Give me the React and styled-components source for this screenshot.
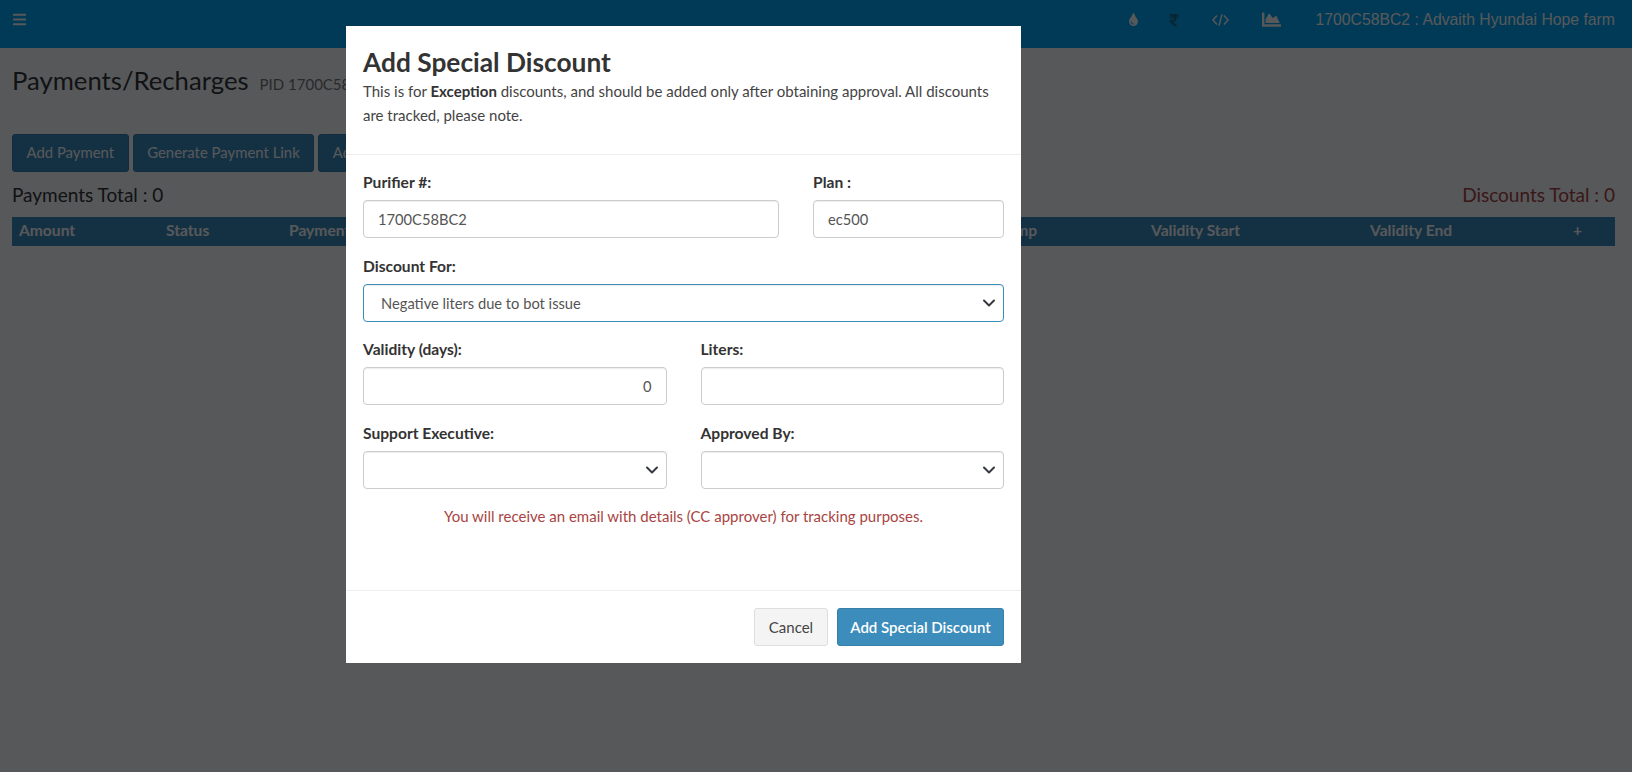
import React from 'react'
import styled, { createGlobalStyle } from 'styled-components'
import { FaBars, FaTint, FaRupeeSign, FaChartArea } from 'react-icons/fa'

const sans = `Lato, "Noto Sans", sans-serif`

const GlobalStyle = createGlobalStyle`
  html, body {
    margin: 0;
    height: 100%;
    background: #fff;
    font-family: ${sans};
    overflow: hidden;
  }
  * { box-sizing: border-box; }
`

const columns = [
  ['Amount', 147],
  ['Status', 123],
  ['Payment Mode', 336],
  ['Reference', 335],
  ['Timestamp', 191],
  ['Validity Start', 219],
  ['Validity End', 203],
  ['+', 26],
]

export default function App() {
  return (
    <>
      <GlobalStyle />
      <Page>
        <NavBar>
          <NavIcon><FaBars size={15} /></NavIcon>
          <NavRight>
            <TopIcon $width={31}><FaTint size={13} /></TopIcon>
            <TopIcon $width={51} $dark><FaRupeeSign size={14} /></TopIcon>
            <TopIcon $width={42}><CodeIcon /></TopIcon>
            <TopIcon $width={60}><FaChartArea size={19} /></TopIcon>
            <NavTitle>1700C58BC2 : Advaith Hyundai Hope farm</NavTitle>
          </NavRight>
        </NavBar>
        <Content>
          <TitleRow>
            <Title>Payments/Recharges</Title>
            <Small>PID 1700C58BC2</Small>
          </TitleRow>
          <Buttons>
            <ToolButton>Add Payment</ToolButton>
            <ToolButton>Generate Payment Link</ToolButton>
            <ToolButton>Add Special Discount</ToolButton>
          </Buttons>
          <Totals>
            <span>Payments Total : 0</span>
            <DiscountTotal>Discounts Total : 0</DiscountTotal>
          </Totals>
          <TableHead>
            {columns.map(([name, width]) => (
              <HeadCell key={name} $width={width}>{name}</HeadCell>
            ))}
          </TableHead>
        </Content>
      </Page>

      <Backdrop />

      <Modal>
        <ModalHeader>
          <ModalTitle>Add Special Discount</ModalTitle>
          <Description>
            This is for <strong>Exception</strong> discounts, and should be added only after obtaining approval. All discounts are tracked, please note.
          </Description>
        </ModalHeader>
        <ModalBody>
          <FormRow $cols="416px 191px">
            <Field>
              <Label>Purifier #:</Label>
              <Input readOnly value="1700C58BC2" />
            </Field>
            <Field>
              <Label>Plan :</Label>
              <Input readOnly value="ec500" />
            </Field>
          </FormRow>
          <FormRow $cols="1fr">
            <Field>
              <Label>Discount For:</Label>
              <SelectBox>
                <Select $focused defaultValue="neg">
                  <option value="neg">Negative liters due to bot issue</option>
                </Select>
                <Chevron />
              </SelectBox>
            </Field>
          </FormRow>
          <FormRow $cols="1fr 1fr">
            <Field>
              <Label>Validity (days):</Label>
              <Input $right readOnly value="0" />
            </Field>
            <Field>
              <Label>Liters:</Label>
              <Input readOnly value="" />
            </Field>
          </FormRow>
          <FormRow $cols="1fr 1fr">
            <Field>
              <Label>Support Executive:</Label>
              <SelectBox>
                <Select><option></option></Select>
                <Chevron />
              </SelectBox>
            </Field>
            <Field>
              <Label>Approved By:</Label>
              <SelectBox>
                <Select><option></option></Select>
                <Chevron />
              </SelectBox>
            </Field>
          </FormRow>
          <Notice>You will receive an email with details (CC approver) for tracking purposes.</Notice>
        </ModalBody>
        <ModalFooter>
          <CancelButton>Cancel</CancelButton>
          <SubmitButton>Add Special Discount</SubmitButton>
        </ModalFooter>
      </Modal>
    </>
  )
}

function CodeIcon() {
  return (
    <svg viewBox="0 0 17 12" width="17" height="12" fill="none" stroke="currentColor" strokeWidth="1.4">
      <path d="M5 1.5 L0.9 6 L5 10.5" />
      <path d="M12 1.5 L16.1 6 L12 10.5" />
      <path d="M10 0.2 L7 11.8" />
    </svg>
  )
}

function Chevron() {
  return (
    <ChevronIcon viewBox="0 0 16 16" width="16" height="16">
      <path d="M3 5.5 L8 10.5 L13 5.5" fill="none" stroke="#343a40" strokeWidth="2" strokeLinecap="round" strokeLinejoin="round" />
    </ChevronIcon>
  )
}

const Page = styled.div`
  height: 772px;
  display: flex;
  flex-direction: column;
`

const NavBar = styled.header`
  height: 48px;
  background: #00a8f4;
  display: flex;
  align-items: center;
  justify-content: space-between;
  padding: 0 17px 9px 12px;
  color: #fff;
`

const NavIcon = styled.span`
  display: flex;
  color: #fff;
`

const NavRight = styled.div`
  display: flex;
  align-items: center;
`

const TopIcon = styled.span`
  display: flex;
  justify-content: center;
  width: ${p => p.$width}px;
  color: ${p => (p.$dark ? '#1a6a90' : '#fff')};
`

const NavTitle = styled.span`
  font: 15.75px "Liberation Sans", Arial, sans-serif;
  margin-left: 14px;
  color: #fff;
`

const Content = styled.main`
  padding: 0 17px 0 12px;
`

const TitleRow = styled.div`
  display: flex;
  align-items: baseline;
  gap: 11px;
  height: 86px;
  padding-top: 13px;
  color: #333;
`

const Title = styled.h1`
  margin: 0;
  font-size: 25.7px;
  font-weight: 400;
  line-height: 38px;
`

const Small = styled.small`
  font-size: 15px;
  color: #777;
`

const Buttons = styled.div`
  display: flex;
  gap: 4px;
`

const ToolButton = styled.button`
  height: 38px;
  padding: 0 13.5px 2px;
  background: #3c8dbc;
  border: 1px solid #367fa9;
  border-radius: 3px;
  color: #fff;
  font: 14.9px ${sans};
  white-space: nowrap;
`

const Totals = styled.div`
  display: flex;
  justify-content: space-between;
  align-items: center;
  height: 45px;
  font-size: 19px;
  color: #333;
`

const DiscountTotal = styled.span`
  color: #a94442;
`

const TableHead = styled.div`
  display: flex;
  align-items: center;
  height: 29px;
  background: #3c8dbc;
  padding: 0 0 3px 7px;
`

const HeadCell = styled.div`
  width: ${p => p.$width}px;
  flex: none;
  color: #fff;
  font-size: 15.6px;
  font-weight: 700;
  white-space: nowrap;
`

const Backdrop = styled.div`
  position: fixed;
  inset: 0;
  background: rgba(0, 2, 5, 0.66);
`

const Modal = styled.section`
  position: fixed;
  left: 346px;
  top: 26px;
  width: 675px;
  height: 637px;
  background: #fff;
  display: flex;
  flex-direction: column;
  color: #333;
`

const ModalHeader = styled.div`
  height: 129px;
  padding: 20px 17px 0;
  border-bottom: 1px solid #eee;
`

const ModalTitle = styled.h2`
  margin: 0 0 2px;
  font-size: 26.3px;
  font-weight: 700;
  line-height: 32px;
`

const Description = styled.p`
  margin: 0;
  font-size: 15px;
  line-height: 23.5px;
  color: #444;

  strong { color: #333; }
`

const ModalBody = styled.div`
  flex: 1;
  padding: 17px 17px 0;
  display: flex;
  flex-direction: column;
  gap: 17.5px;
`

const FormRow = styled.div`
  display: grid;
  grid-template-columns: ${p => p.$cols};
  column-gap: 34px;
`

const Field = styled.div`
  display: flex;
  flex-direction: column;
  gap: 8px;
`

const Label = styled.label`
  font-size: 15.6px;
  font-weight: 700;
  line-height: 20px;
  color: #333;
`

const Input = styled.input`
  height: 38px;
  width: 100%;
  padding: 0 14px;
  border: 1px solid #ccc;
  border-radius: 4px;
  box-shadow: inset 0 1px 1px rgba(0, 0, 0, 0.075);
  font: 14.7px ${sans};
  color: #555;
  text-align: ${p => (p.$right ? 'right' : 'left')};
  outline: none;
`

const SelectBox = styled.div`
  position: relative;
`

const Select = styled.select`
  appearance: none;
  height: 38px;
  width: 100%;
  padding: 0 17px;
  background: #fff;
  border: 1px solid ${p => (p.$focused ? '#3c8dbc' : '#ccc')};
  border-radius: 4px;
  box-shadow: inset 0 1px 1px rgba(0, 0, 0, 0.075);
  font: 14.7px ${sans};
  color: #555;
  outline: none;
`

const ChevronIcon = styled.svg`
  position: absolute;
  right: 7px;
  top: 11px;
  pointer-events: none;
`

const Notice = styled.p`
  margin: 0;
  text-align: center;
  font-size: 15px;
  line-height: 20px;
  color: #a94442;
`

const ModalFooter = styled.div`
  height: 73px;
  padding: 17px;
  border-top: 1px solid #eee;
  display: flex;
  justify-content: flex-end;
  gap: 9px;
`

const CancelButton = styled.button`
  height: 38px;
  width: 74px;
  background: #f4f4f4;
  border: 1px solid #ddd;
  border-radius: 3px;
  color: #444;
  font: 15px ${sans};
`

const SubmitButton = styled.button`
  height: 38px;
  width: 167px;
  background: #3c8dbc;
  border: 1px solid #367fa9;
  border-radius: 3px;
  color: #fff;
  font: 600 15px ${sans};
`
